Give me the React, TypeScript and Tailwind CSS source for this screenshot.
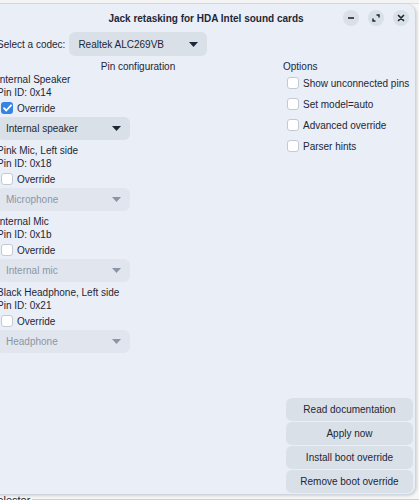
import React from "react";

const font = { fontFamily: '"Liberation Sans", Arial, sans-serif' };

function Caret({ muted }: { muted?: boolean }) {
  return (
    <svg width="9" height="5" viewBox="0 0 9 5" className="shrink-0">
      <path d="M0 0h9L4.5 5z" fill={muted ? "#8b95a5" : "#1c2738"} />
    </svg>
  );
}

function Dropdown({ label, width, disabled }: { label: string; width: string; disabled?: boolean }) {
  return (
    <div
      className={`flex h-[23px] items-center justify-between rounded-[6px] pl-[9px] pr-[9px] ${width} ${
        disabled ? "bg-[#e1e6ee] text-[#8b95a5]" : "bg-[#d9e0e8] text-[#1c2738]"
      }`}
    >
      <span>{label}</span>
      <Caret muted={disabled} />
    </div>
  );
}

function Box({ checked }: { checked?: boolean }) {
  return checked ? (
    <div className="flex h-[12px] w-[12px] items-center justify-center rounded-[3px] bg-[#3584e4]">
      <svg width="9" height="8" viewBox="0 0 9 8">
        <path d="M1 4.2l2.3 2.3L8 1.3" fill="none" stroke="#fff" strokeWidth="1.8" strokeLinecap="round" strokeLinejoin="round" />
      </svg>
    </div>
  ) : (
    <div className="h-[12px] w-[12px] rounded-[3px] border border-[#c3cad4] bg-white" />
  );
}

const pins = [
  { name: "Internal Speaker", id: "0x14", checked: true, value: "Internal speaker" },
  { name: "Pink Mic, Left side", id: "0x18", checked: false, value: "Microphone" },
  { name: "Internal Mic", id: "0x1b", checked: false, value: "Internal mic" },
  { name: "Black Headphone, Left side", id: "0x21", checked: false, value: "Headphone" },
];

const options = ["Show unconnected pins", "Set model=auto", "Advanced override", "Parser hints"];

const actions = ["Read documentation", "Apply now", "Install boot override", "Remove boot override"];

function RoundBtn({ children }: { children: React.ReactNode }) {
  return (
    <div className="flex h-[16px] w-[16px] items-center justify-center rounded-full bg-[#d9e0e8]">{children}</div>
  );
}

export default function App() {
  return (
    <div className="relative h-[500px] w-[419px] overflow-hidden bg-[#f7f7f7] text-[10px] leading-[13px] text-[#1c2738]" style={font}>
      {/* desktop strip above the window */}
      <div className="h-[4px] border-b border-[#dcdcdc] bg-[#f4f4f4]" />

      {/* dialog window */}
      <div className="ml-[-3px] flex h-[491px] w-[419px] flex-col rounded-r-[9px] border-r border-b border-[#cfd5de] bg-[#eaeef6] shadow-[1px_1px_3px_rgba(0,0,0,0.15)]">
        {/* title bar */}
        <div className="relative flex h-[28px] shrink-0 items-center justify-center">
          <span className="pt-[1px] font-bold">Jack retasking for HDA Intel sound cards</span>
          <div className="absolute right-[6px] top-[6px] flex gap-[9px]">
            <RoundBtn>
              <svg width="8" height="8" viewBox="0 0 8 8">
                <rect x="1" y="3.2" width="6" height="1.6" fill="#1c2738" />
              </svg>
            </RoundBtn>
            <RoundBtn>
              <svg width="8" height="8" viewBox="0 0 8 8">
                <path d="M4.5 1H7v2.5" fill="none" stroke="#1c2738" strokeWidth="1.5" />
                <path d="M3.5 7H1V4.5" fill="none" stroke="#1c2738" strokeWidth="1.5" />
              </svg>
            </RoundBtn>
            <RoundBtn>
              <svg width="8" height="8" viewBox="0 0 8 8">
                <path d="M1.5 1.5l5 5M6.5 1.5l-5 5" stroke="#1c2738" strokeWidth="1.7" strokeLinecap="round" />
              </svg>
            </RoundBtn>
          </div>
        </div>

        {/* codec selector */}
        <div className="flex h-[24px] shrink-0 items-center gap-[4px]">
          <span>Select a codec:</span>
          <div className="flex h-[24px] w-[138px] items-center justify-between rounded-[6px] bg-[#d9e0e8] px-[9px]">
            <span>Realtek ALC269VB</span>
            <Caret />
          </div>
        </div>

        <div className="mt-[4px] flex flex-1 gap-[4px]">
          {/* pin configuration */}
          <div className="flex w-[282px] flex-col">
            <div className="text-center">Pin configuration</div>
            {pins.map((p) => (
              <div key={p.id} className="mb-[4px] flex flex-col">
                <div>{p.name}</div>
                <div>Pin ID: {p.id}</div>
                <div className="flex h-[18px] items-center gap-[4px] pl-[4px]">
                  <Box checked={p.checked} />
                  <span>Override</span>
                </div>
                <Dropdown label={p.value} width="w-[133px]" disabled={!p.checked} />
              </div>
            ))}
          </div>

          {/* options and actions */}
          <div className="flex flex-1 flex-col pb-[1px]">
            <div>Options</div>
            <div className="mt-[4px] flex flex-col gap-[9px] pl-[4px]">
              {options.map((o) => (
                <div key={o} className="flex h-[12px] items-center gap-[4px]">
                  <Box />
                  <span>{o}</span>
                </div>
              ))}
            </div>
            <div className="mt-auto flex flex-col gap-[1px] pl-[3px] pr-[2px]">
              {actions.map((a) => (
                <div key={a} className="flex h-[23px] items-center justify-center rounded-[6px] bg-[#d9e0e8]">
                  {a}
                </div>
              ))}
            </div>
          </div>
        </div>
      </div>

      {/* neighbouring window peeking out below */}
      <div className="mt-[1px] flex items-center">
        <span className="ml-[-10px] text-[11px] leading-[8px] text-[#222]">Selector</span>
        <div className="ml-[2px] h-[2px] flex-1 bg-[#cfcfcf]" />
      </div>
    </div>
  );
}
